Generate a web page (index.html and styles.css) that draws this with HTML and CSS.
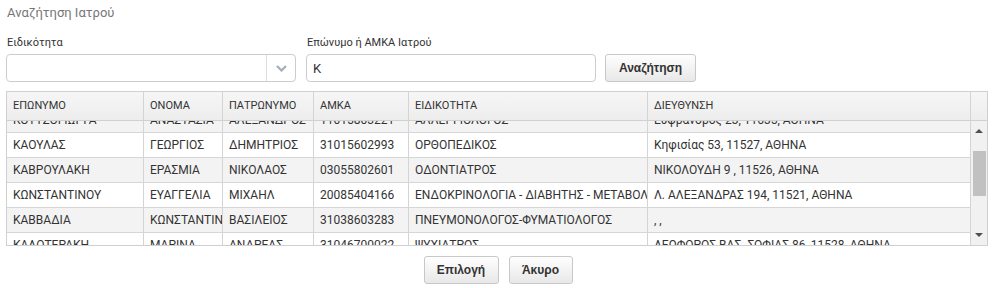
FILE: index.html
```html
<!DOCTYPE html>
<html lang="el">
<head>
  <meta charset="UTF-8">
  <title>Αναζήτηση Ιατρού</title>
  <link rel="stylesheet" href="styles.css">
</head>
<body>

<div class="page">
  <div class="title">Αναζήτηση Ιατρού</div>

  <div class="search">
    <div class="field field-spec">
      <label>Ειδικότητα</label>
      <div class="select">
        <span class="select-value"></span>
        <span class="select-arrow">
          <svg width="11" height="7" viewBox="0 0 11 7"><path d="M1 1 L5.5 5.5 L10 1" fill="none" stroke="#a3adb8" stroke-width="2.2"/></svg>
        </span>
      </div>
    </div>
    <div class="field field-name">
      <label>Επώνυμο ή ΑΜΚΑ Ιατρού</label>
      <input type="text" value="Κ">
    </div>
    <button class="btn btn-search">Αναζήτηση</button>
  </div>

  <div class="grid">
    <div class="grid-head">
      <div class="c c1">ΕΠΩΝΥΜΟ</div>
      <div class="c c2">ΟΝΟΜΑ</div>
      <div class="c c3">ΠΑΤΡΩΝΥΜΟ</div>
      <div class="c c4">ΑΜΚΑ</div>
      <div class="c c5">ΕΙΔΙΚΟΤΗΤΑ</div>
      <div class="c c6">ΔΙΕΥΘΥΝΣΗ</div>
      <div class="c corner"></div>
    </div>
    <div class="grid-body">
      <div class="viewport">
        <div class="rows">
          <div class="row">
            <div class="c c1">ΚΟΥΤΣΟΓΙΩΡΓΑ</div><div class="c c2">ΑΝΑΣΤΑΣΙΑ</div><div class="c c3">ΑΛΕΞΑΝΔΡΟΣ</div><div class="c c4">11015803221</div><div class="c c5">ΑΛΛΕΡΓΙΟΛΟΓΟΣ</div><div class="c c6">Ευφράνορος 23, 11635, ΑΘΗΝΑ</div>
          </div>
          <div class="row">
            <div class="c c1">ΚΑΟΥΛΑΣ</div><div class="c c2">ΓΕΩΡΓΙΟΣ</div><div class="c c3">ΔΗΜΗΤΡΙΟΣ</div><div class="c c4">31015602993</div><div class="c c5">ΟΡΘΟΠΕΔΙΚΟΣ</div><div class="c c6">Κηφισίας 53, 11527, ΑΘΗΝΑ</div>
          </div>
          <div class="row">
            <div class="c c1">ΚΑΒΡΟΥΛΑΚΗ</div><div class="c c2">ΕΡΑΣΜΙΑ</div><div class="c c3">ΝΙΚΟΛΑΟΣ</div><div class="c c4">03055802601</div><div class="c c5">ΟΔΟΝΤΙΑΤΡΟΣ</div><div class="c c6">ΝΙΚΟΛΟΥΔΗ 9 , 11526, ΑΘΗΝΑ</div>
          </div>
          <div class="row">
            <div class="c c1">ΚΩΝΣΤΑΝΤΙΝΟΥ</div><div class="c c2">ΕΥΑΓΓΕΛΙΑ</div><div class="c c3">ΜΙΧΑΗΛ</div><div class="c c4">20085404166</div><div class="c c5">ΕΝΔΟΚΡΙΝΟΛΟΓΙΑ - ΔΙΑΒΗΤΗΣ - ΜΕΤΑΒΟΛΙΣΜΟΣ</div><div class="c c6">Λ. ΑΛΕΞΑΝΔΡΑΣ 194, 11521, ΑΘΗΝΑ</div>
          </div>
          <div class="row">
            <div class="c c1">ΚΑΒΒΑΔΙΑ</div><div class="c c2">ΚΩΝΣΤΑΝΤΙΝΑ</div><div class="c c3">ΒΑΣΙΛΕΙΟΣ</div><div class="c c4">31038603283</div><div class="c c5">ΠΝΕΥΜΟΝΟΛΟΓΟΣ-ΦΥΜΑΤΙΟΛΟΓΟΣ</div><div class="c c6">, ,</div>
          </div>
          <div class="row">
            <div class="c c1">ΚΑΛΟΤΕΡΑΚΗ</div><div class="c c2">ΜΑΡΙΝΑ</div><div class="c c3">ΑΝΔΡΕΑΣ</div><div class="c c4">31046700022</div><div class="c c5">ΨΥΧΙΑΤΡΟΣ</div><div class="c c6">ΛΕΩΦΟΡΟΣ ΒΑΣ. ΣΟΦΙΑΣ 86, 11528, ΑΘΗΝΑ</div>
          </div>
        </div>
      </div>
      <div class="scrollbar">
        <span class="arrow up"></span>
        <span class="thumb"></span>
        <span class="arrow down"></span>
      </div>
    </div>
  </div>

  <div class="actions">
    <button class="btn btn-ok">Επιλογή</button>
    <button class="btn btn-cancel">Άκυρο</button>
  </div>
</div>

</body>
</html>
```

FILE: styles.css
```css
body {
  margin: 0;
  background: #fff;
  color: #333;
  font-family: Roboto, 'Liberation Sans', sans-serif;
}
.page { padding: 4px 9px 0 6px; }

.title {
  color: #777;
  font-size: 13px;
  line-height: 17px;
  padding-left: 1px;
}

.search {
  display: flex;
  align-items: flex-end;
  margin-top: 15px;
}
.field label {
  display: block;
  font-size: 11px;
  line-height: 14px;
  color: #333;
  padding-left: 1px;
  margin-bottom: 4px;
}
.field-spec { width: 290px; }
.field-name { width: 290px; margin-left: 10px; }

.select {
  display: flex;
  height: 28px;
  box-sizing: border-box;
  border: 1px solid #ccc;
  border-radius: 4px;
  background: #fff;
}
.select-value { flex: 1; }
.select-arrow {
  width: 28px;
  border-left: 1px solid #ddd;
  display: flex;
  align-items: center;
  justify-content: center;
}

input {
  width: 100%;
  height: 28px;
  box-sizing: border-box;
  border: 1px solid #ccc;
  border-radius: 4px;
  padding: 0 6px;
  font-family: Roboto, sans-serif;
  font-size: 13px;
  color: #333;
}

.btn {
  height: 28px;
  box-sizing: border-box;
  border: 1px solid #c8c8c8;
  border-radius: 3px;
  background: linear-gradient(#fefefe, #e8e8e8);
  font-family: 'Liberation Sans', Arial, sans-serif;
  font-weight: bold;
  font-size: 12px;
  color: #333;
  padding: 0;
  cursor: pointer;
}
.btn-search { width: 91px; margin-left: 9px; }

.grid {
  margin-top: 9px;
  width: 982px;
  box-sizing: border-box;
  border: 1px solid #d0d0d0;
  font-size: 12px;
}
.grid-head {
  display: flex;
  height: 29px;
  box-sizing: border-box;
  border-bottom: 1px solid #d0d0d0;
  background: linear-gradient(#f6f6f6, #ededed);
  font-size: 11px;
}
.grid-head .c { line-height: 28px; }

.c {
  box-sizing: border-box;
  border-right: 1px solid #d4d4d4;
  padding-left: 6px;
  white-space: nowrap;
  overflow: hidden;
  text-overflow: clip;
  flex: none;
}
.c1 { width: 137px; }
.c2 { width: 79px; }
.c3 { width: 91px; }
.c4 { width: 95px; }
.c5 { width: 239px; }
.c6 { width: 323px; }
.corner { width: 16px; border-right: none; padding: 0; }

.grid-body {
  display: flex;
  height: 124px;
}
.viewport {
  width: 964px;
  overflow: hidden;
}
.rows { margin-top: -13px; }
.row {
  display: flex;
  height: 25px;
  box-sizing: border-box;
  border-bottom: 1px solid #d6d6d6;
  background: #fff;
}
.row:nth-child(odd) { background: #f3f3f3; }
.row .c { line-height: 24px; }

.scrollbar {
  width: 16px;
  background: #f1f1f1;
  position: relative;
}
.thumb {
  position: absolute;
  left: 2px;
  right: 1px;
  top: 30px;
  height: 45px;
  background: #c1c1c1;
}
.arrow {
  position: absolute;
  left: 4px;
  width: 0;
  height: 0;
  border-left: 4px solid transparent;
  border-right: 4px solid transparent;
}
.arrow.up { top: 8px; border-bottom: 4px solid #505050; }
.arrow.down { bottom: 8px; border-top: 4px solid #505050; }

.actions {
  display: flex;
  justify-content: center;
  gap: 10px;
  margin-top: 10px;
  padding-left: 3px;
}
.btn-ok { width: 75px; }
.btn-cancel { width: 64px; }
```
